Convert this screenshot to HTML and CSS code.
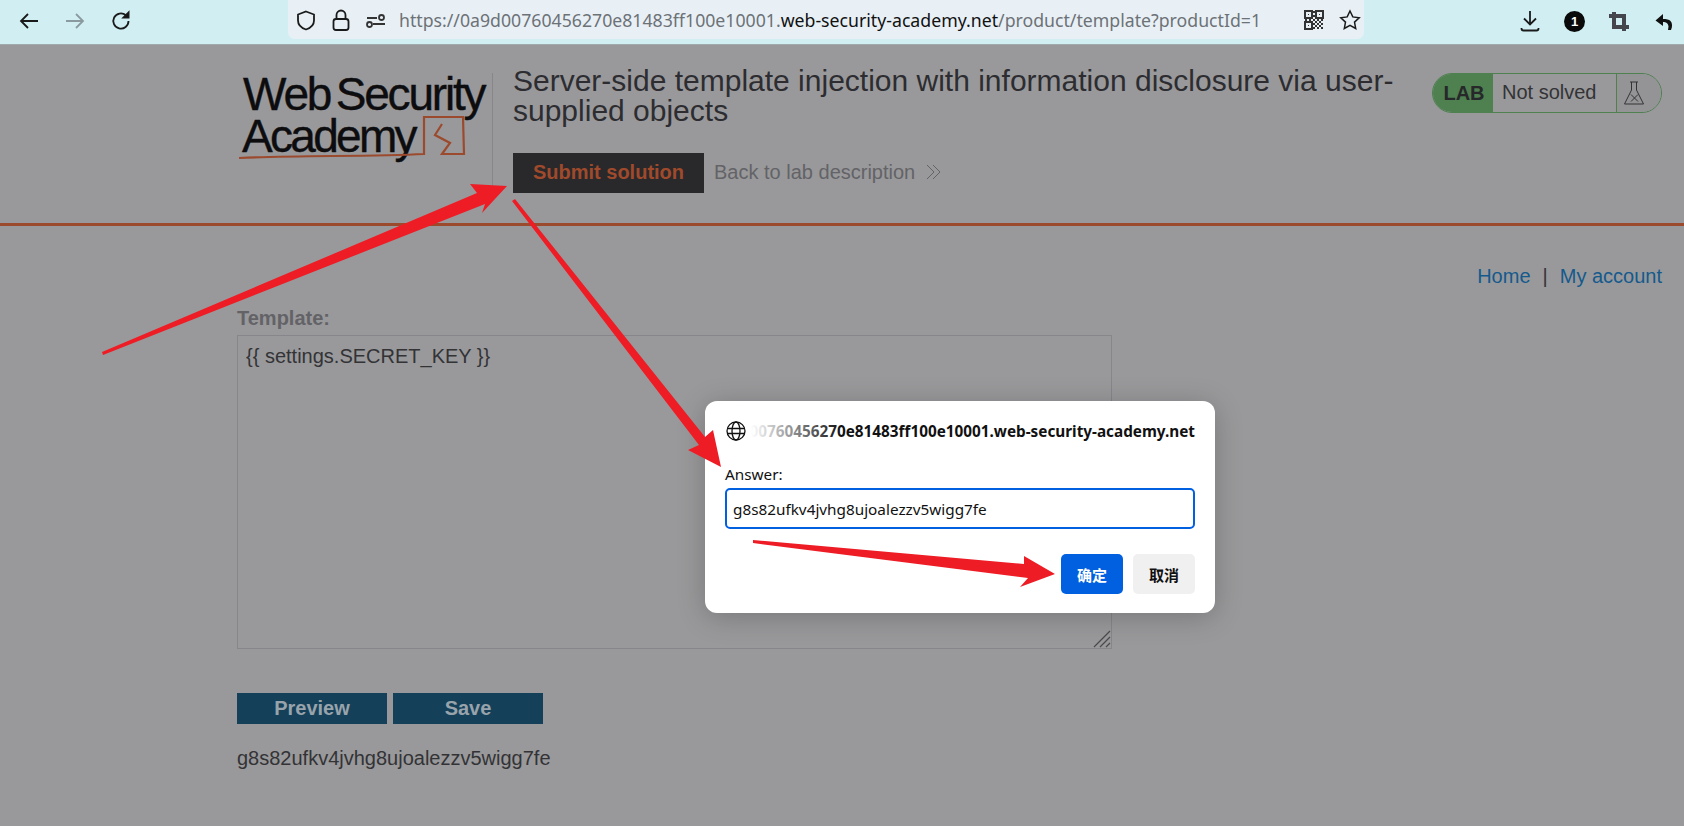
FILE: index.html
```html
<!DOCTYPE html>
<html lang="en">

<head>
    <meta charset="UTF-8">
    <meta name="viewport" content="width=device-width, initial-scale=1.0">
    <title>Server-side template injection</title>
    <link rel="stylesheet" href="styles.css">
</head>

<body>
    <div id="toolbar">
        <div class="nav">
            <svg width="24" height="24" viewBox="0 0 24 24" class="ikona"><path d="M21 12H4M11 5l-7 7 7 7" /></svg>
            <svg width="24" height="24" viewBox="0 0 24 24" class="ikona szara"><path d="M3 12h17M13 5l7 7-7 7" /></svg>
            <svg width="24" height="24" viewBox="0 0 24 24" class="ikona"><path d="M19.5 12a7.6 7.6 0 1 1-2.6-5.7" /><path d="M19.6 3.4v5.2h-5.2z" fill="#111" /></svg>
        </div>
        <div id="urlbar">
            <svg width="22" height="24" viewBox="0 0 22 24" class="ikona"><path d="M11 3.5l8 3v6c0 4.500-3.500 7.500-8 9-4.500-1.500-8-4.500-8-9v-6z" /></svg>
            <svg width="22" height="24" viewBox="0 0 22 24" class="ikona"><rect x="3.500" y="11" width="15" height="11" rx="2.500" /><path d="M6.500 11V7a4.500 4.500 0 0 1 9 0v4" /></svg>
            <svg width="22" height="24" viewBox="0 0 22 24" class="ikona cienka"><path d="M2 10h10M8 16h12" /><circle cx="16.500" cy="9.500" r="2.500" /><circle cx="4.500" cy="16.500" r="2.500" /></svg>
            <div id="adres">https://0a9d00760456270e81483ff100e10001.<b>web-security-academy.net</b>/product/template?productId=1</div>
            <svg width="20" height="20" viewBox="0 0 20 20" class="qr"><path d="M1 1h7v7H1zM12 1h7v7h-7zM1 12h7v7H1z" fill="none" stroke="#333" stroke-width="2" /><path d="M4 4h1v1H4zM15 4h1v1h-1zM4 15h1v1H4zM9 1h2v2H9zM9 5h2v2H9zM1 9h2v2H1zM5 9h2v2H5zM9 9h2v2H9zM13 9h2v2h-2zM17 9h2v2h-2zM11 11h2v2h-2zM15 11h2v2h-2zM9 13h2v2H9zM13 13h2v2h-2zM17 13h2v2h-2zM11 15h2v2h-2zM15 15h2v2h-2zM9 17h2v2H9zM13 17h2v2h-2zM17 17h2v2h-2z" fill="#333" /></svg>
            <svg width="22" height="22" viewBox="0 0 22 22" class="ikona gwiazda"><path d="M11 2l2.800 5.900 6.400.8-4.700 4.400 1.200 6.400-5.700-3.100-5.700 3.100 1.200-6.400L1.800 8.700l6.400-.8z" /></svg>
        </div>
        <div class="prawe">
            <svg width="22" height="24" viewBox="0 0 22 24" class="ikona"><path d="M11 2v13M5 9.500l6 6 6-6M2.500 19v.5a2 2 0 0 0 2 2h13a2 2 0 0 0 2-2V19" /></svg>
            <div id="licznik">1</div>
            <svg width="22" height="24" viewBox="0 0 22 24" class="kadr"><path d="M6 3v15h15M1 7h15v15" fill="none" stroke="#45454d" stroke-width="4" /></svg>
            <svg width="22" height="24" viewBox="0 0 22 24"><path d="M10 5L2.500 11.500 10 17v-4c3 0 5 1 5.500 4.500l-.5 3.500h3c1.500-3 1.500-7-.5-9-1.500-1.500-4-2-7.500-2z" fill="#111" /></svg>
        </div>
    </div>

    <div id="naglowek">
        <div id="logo">
            <div class="logo-tekst">Web Security</div>
            <div class="logo-tekst akademia">Academy</div>
            <svg width="250" height="60" viewBox="0 0 250 60" class="logo-znak">
                <path d="M0 42C60 39 130 41 185 38V1h39l1 37h-22l8-11-15-8 7-11" fill="none" stroke="#9c4a2e" stroke-width="2.200" />
            </svg>
        </div>
        <div id="tytul">
            <h2>Server-side template injection with information disclosure via user-supplied objects</h2>
            <div class="akcje">
                <button id="submit">Submit solution</button>
                <a href="#" class="powrot">Back to lab description</a>
                <svg width="16" height="16" viewBox="0 0 16 16" class="szewrony"><path d="M1 1l7 7-7 7M7 1l7 7-7 7" /></svg>
            </div>
        </div>
        <div id="status">
            <div class="lab">LAB</div>
            <div class="stan">Not solved</div>
            <div class="kolba">
                <svg width="22" height="26" viewBox="0 0 22 26"><path d="M7 2h8M8.500 2v8L1.500 24h19L13.500 10V2M8 14.500l7 7M15 14.500l-7 7" /></svg>
            </div>
        </div>
    </div>

    <div id="tresc">
        <div id="linki"><a href="#">Home</a><span>|</span><a href="#">My account</a></div>
        <label for="szablon">Template:</label>
        <div id="pole">
            <textarea id="szablon" spellcheck="false">{{ settings.SECRET_KEY }}</textarea>
            <svg width="18" height="18" viewBox="0 0 18 18" class="uchwyt"><path d="M1 17L17 1M7 17L17 7M13 17l4-4" /></svg>
        </div>
        <div id="przyciski">
            <button>Preview</button>
            <button>Save</button>
        </div>
        <p id="wynik">g8s82ufkv4jvhg8ujoalezzv5wigg7fe</p>
    </div>

    <div id="okno">
        <div class="okno-gora">
            <svg width="20" height="20" viewBox="0 0 20 20" class="glob"><circle cx="10" cy="10" r="9" /><ellipse cx="10" cy="10" rx="4" ry="9" /><path d="M1.500 7.500h17M1.500 12.500h17" /></svg>
            <div class="host"><span>0a9d00760456270e81483ff100e10001.web-security-academy.net</span></div>
        </div>
        <div class="pytanie">Answer:</div>
        <input type="text" value="g8s82ufkv4jvhg8ujoalezzv5wigg7fe">
        <div class="okno-dol">
            <button class="ok">确定</button>
            <button class="anuluj">取消</button>
        </div>
    </div>

    <svg id="strzalki" width="1684" height="826" viewBox="0 0 1684 826">
        <polygon points="102,352 477,193 470,184 507,186 482,213 485,204 103,355" />
        <polygon points="512,201 515,199 705,437 713,430 721,467 688,450 699,445" />
        <polygon points="753,540 1024,564 1024,556 1055,574 1020,587 1028,578 753,543" />
    </svg>
</body>

</html>
```

FILE: styles.css
```css
* {
    box-sizing: border-box;
    margin: 0;
    padding: 0;
}

body {
    width: 1684px;
    height: 826px;
    overflow: hidden;
    position: relative;
    background-color: #99999b;
    color: #333336;
    font-family: "Liberation Sans", Arial, sans-serif;
    font-size: 20px;
}

.ikona {
    fill: none;
    stroke: #1a1a1a;
    stroke-width: 1.8;
    flex: none;
}

.szara {
    stroke: #8b9a9e;
}

.cienka {
    stroke: #333;
}

/* pasek przegladarki */
#toolbar {
    height: 45px;
    display: flex;
    background-color: #d1eff3;
    border-bottom: 1px solid #a0aaad;
}

.nav {
    width: 288px;
    display: flex;
    align-items: center;
    gap: 22px;
    padding-left: 17px;
    padding-bottom: 2px;
}

#urlbar {
    width: 1076px;
    height: 39px;
    display: flex;
    align-items: center;
    background-color: #e8f0f6;
    border-radius: 0 0 7px 7px;
    padding-left: 7px;
    gap: 13px;
}

#adres {
    width: 890px;
    margin-left: -1px;
    font-family: "Noto Sans", sans-serif;
    font-size: 17.700px;
    white-space: nowrap;
    color: #6d7276;
}

#adres b {
    font-weight: normal;
    color: #111;
}

.qr {
    flex: none;
    margin-left: 2px;
}

.gwiazda {
    margin-left: 2px;
    stroke-width: 1.500;
}

.prawe {
    flex: 1;
    display: flex;
    align-items: center;
    gap: 23px;
    padding-left: 155px;
    padding-bottom: 2px;
}

#licznik {
    width: 21px;
    height: 21px;
    border-radius: 50%;
    background-color: #0a0a0a;
    color: white;
    font-size: 13px;
    font-weight: bold;
    text-align: center;
    line-height: 21px;
}

/* naglowek labu */
#naglowek {
    height: 181px;
    display: flex;
    padding-left: 243px;
    border-bottom: 3px solid #9c4a2e;
}

#logo {
    position: relative;
    width: 250px;
    height: 112px;
    margin-top: 28px;
    border-right: 1px solid #87878a;
}

.logo-tekst {
    font-size: 46px;
    letter-spacing: -2.200px;
    word-spacing: -5px;
    line-height: 42px;
    color: #0d0d0f;
    white-space: nowrap;
    -webkit-text-stroke: 0.4px #0d0d0f;
}

.akademia {
    letter-spacing: -2.700px;
    margin-left: -1px;
}

.logo-znak {
    position: absolute;
    left: -4px;
    top: 43px;
}

#tytul {
    width: 885px;
    margin-left: 20px;
}

h2 {
    font-weight: normal;
    font-size: 30px;
    line-height: 30px;
    margin-top: 21px;
    color: #2d2d31;
}

.akcje {
    display: flex;
    align-items: center;
    margin-top: 27px;
}

#submit {
    width: 191px;
    height: 40px;
    padding-bottom: 2px;
    border: none;
    background-color: #29292b;
    color: #a04a2b;
    font-family: inherit;
    font-size: 20px;
    font-weight: bold;
}

.powrot {
    margin-left: 10px;
    margin-bottom: 2px;
    color: #636367;
    text-decoration: none;
}

.szewrony {
    margin-left: 11px;
    margin-bottom: 2px;
    fill: none;
    stroke: #636367;
    stroke-width: 1;
}

#status {
    width: 230px;
    height: 40px;
    margin-top: 28px;
    margin-left: 34px;
    display: flex;
    border: 1px solid #4e8050;
    border-radius: 20px;
    overflow: hidden;
}

.lab {
    width: 60px;
    background-color: #4e8050;
    color: #26282a;
    font-weight: bold;
    text-align: center;
    line-height: 38px;
    padding-left: 2px;
}

.stan {
    width: 124px;
    padding-left: 9px;
    line-height: 36px;
    border-right: 1px solid #4e8050;
}

.kolba {
    flex: 1;
    display: flex;
    justify-content: center;
    align-items: center;
    padding-right: 10px;
    background-color: #949497;
}

.kolba svg {
    fill: none;
    stroke: #333336;
    stroke-width: 1;
}

/* tresc strony */
#tresc {
    padding-left: 237px;
}

#linki {
    display: flex;
    justify-content: flex-end;
    gap: 12px;
    padding-right: 22px;
    margin-top: 37px;
    line-height: 26px;
}

#linki a {
    color: #155a8c;
    text-decoration: none;
}

label {
    display: block;
    margin-top: 17px;
    font-weight: bold;
    color: #636367;
    line-height: 24px;
}

#pole {
    position: relative;
    width: 875px;
    height: 314px;
    margin-top: 5px;
}

textarea {
    display: block;
    width: 100%;
    height: 100%;
    padding: 9px 8px;
    resize: none;
    background: transparent;
    border: 1px solid #87878b;
    outline: none;
    color: #333336;
    font-family: inherit;
    font-size: 20px;
    line-height: 22px;
}

.uchwyt {
    position: absolute;
    right: 1px;
    bottom: 1px;
    fill: none;
    stroke: #4a4a4e;
    stroke-width: 1.200;
}

#przyciski {
    display: flex;
    gap: 6px;
    margin-top: 44px;
}

#przyciski button {
    width: 150px;
    height: 31px;
    border: none;
    background-color: #15405a;
    color: #98a3ab;
    font-family: inherit;
    font-size: 20px;
    font-weight: bold;
}

#wynik {
    margin-top: 22px;
    line-height: 24px;
}

/* okno prompt */
#okno {
    position: absolute;
    left: 705px;
    top: 401px;
    width: 510px;
    height: 212px;
    padding: 19px 20px 20px;
    background-color: white;
    border-radius: 12px;
    box-shadow: 0 4px 28px rgba(0, 0, 0, 0.22);
    color: #111;
    font-family: "Noto Sans", sans-serif;
    font-size: 15.300px;
}

.okno-gora {
    display: flex;
    align-items: center;
    height: 22px;
    margin-left: 1px;
}

.glob {
    flex: none;
    fill: none;
    stroke: #111;
    stroke-width: 1.300;
}

.host {
    position: relative;
    flex: 1;
    margin-left: 5px;
    display: flex;
    justify-content: flex-end;
    overflow: hidden;
    white-space: nowrap;
    font-weight: bold;
}

.host::before {
    content: "";
    position: absolute;
    left: 0;
    top: 0;
    bottom: 0;
    width: 90px;
    background: linear-gradient(to right, white, rgba(255, 255, 255, 0));
}

.pytanie {
    margin-top: 21px;
    line-height: 22px;
}

input {
    display: block;
    width: 100%;
    height: 41px;
    margin-top: 3px;
    padding: 0 6px;
    border: 2px solid #0060df;
    border-radius: 5px;
    outline: none;
    color: #111;
    font-family: inherit;
    font-size: 15.300px;
}

.okno-dol {
    display: flex;
    justify-content: flex-end;
    gap: 10px;
    margin-top: 25px;
}

.okno-dol button {
    width: 62px;
    height: 40px;
    border: none;
    border-radius: 5px;
    font-family: "Noto Sans CJK SC", sans-serif;
    font-size: 15px;
    font-weight: bold;
}

.ok {
    background-color: #0060df;
    color: white;
}

.anuluj {
    background-color: #f0f0f0;
    color: #111;
}

/* czerwone strzalki na wierzchu */
#strzalki {
    position: absolute;
    left: 0;
    top: 0;
    fill: #ee1c25;
    pointer-events: none;
}
```
